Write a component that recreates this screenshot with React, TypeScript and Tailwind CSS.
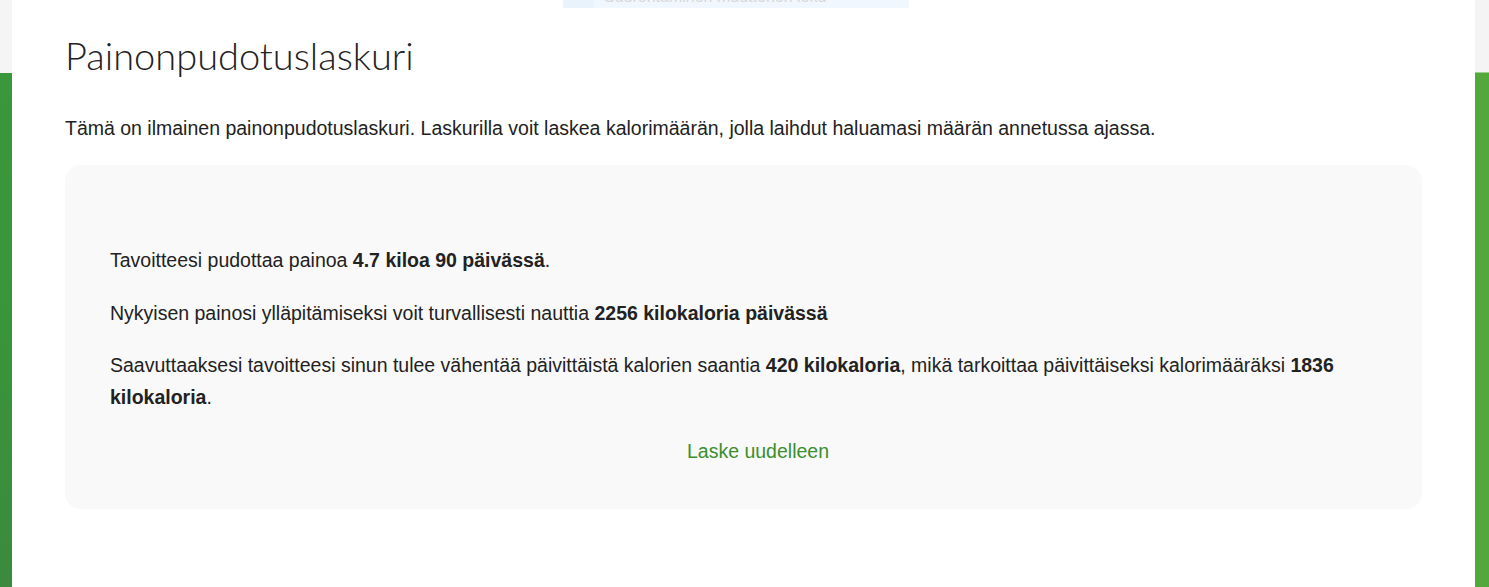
import React from "react";

export default function App() {
  return (
    <div className="relative flex w-[1489px] h-[587px] overflow-hidden bg-white" style={{ fontFamily: '"Liberation Sans", Arial, sans-serif' }}>
      <div className="flex flex-col w-[12px] shrink-0">
        <div className="h-[73px] bg-[#f5f5f5]" />
        <div className="flex-1 bg-gradient-to-b from-[#3a973b] via-[#3a943a] to-[#3b8a3e]" />
      </div>
      <main className="flex-1 bg-white pl-[53px] pr-[53px] pt-[33px]">
        <h1 className="text-[38px] leading-[44px] font-light text-[#222]" style={{ fontFamily: 'Lato, "Open Sans", sans-serif' }}>
          Painonpudotuslaskuri
        </h1>
        <p className="mt-[39px] text-[19.5px] leading-[24px] text-[#222]">
          Tämä on ilmainen painonpudotuslaskuri. Laskurilla voit laskea kalorimäärän, jolla laihdut haluamasi määrän annetussa ajassa.
        </p>
        <section className="mt-[25px] w-[1357px] rounded-[16px] bg-[#f9f9f9] pl-[45px] pr-[16px] pt-[79px] pb-[42px] text-[19.5px] leading-[32px] text-[#222]">
          <p className="mb-[21px]">
            Tavoitteesi pudottaa painoa <b>4.7 kiloa 90 päivässä</b>.
          </p>
          <p className="mb-[20px]">
            Nykyisen painosi ylläpitämiseksi voit turvallisesti nauttia <b>2256 kilokaloria päivässä</b>
          </p>
          <p className="mb-[22px]">
            Saavuttaaksesi tavoitteesi sinun tulee vähentää päivittäistä kalorien saantia <b>420 kilokaloria</b>, mikä tarkoittaa päivittäiseksi kalorimääräksi <b>1836 kilokaloria</b>.
          </p>
          <div className="text-center">
            <span className="text-[#3a8f2f] text-[19.5px]">Laske uudelleen</span>
          </div>
        </section>
      </main>
      <div className="flex flex-col w-[14px] shrink-0">
        <div className="h-[72px] bg-[#f4f4f4]" />
        <div className="h-[1px] bg-[#9fcf8f]" />
        <div className="flex-1 bg-[#52a83a]" />
      </div>
      <div className="absolute left-[563px] top-0 flex h-[8px] w-[346px] overflow-hidden">
        <div className="w-[31px] bg-[#e8f3fc]" />
        <div className="flex-1 bg-[#f0f7fe] pl-[10px]">
          <span className="block -mt-[12px] text-[16px] leading-[18px] text-[#d8d8d8]">Suurentaminen muuttohon loku</span>
        </div>
      </div>
    </div>
  );
}
